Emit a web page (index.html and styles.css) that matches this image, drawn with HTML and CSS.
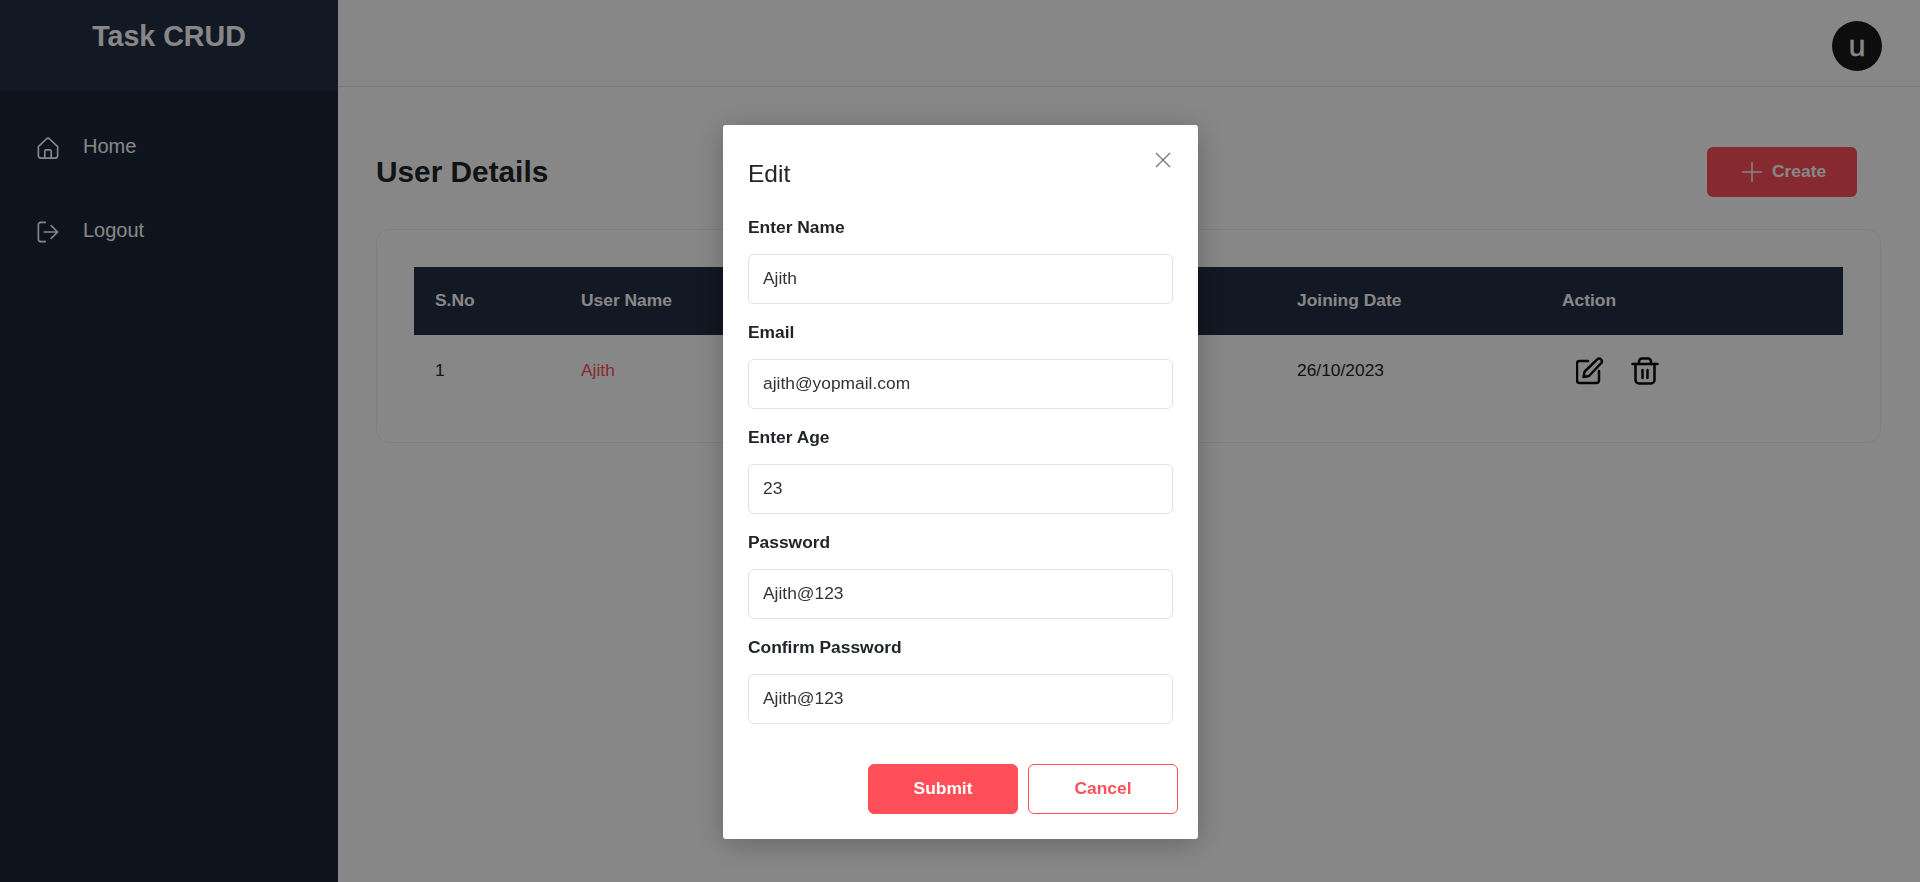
FILE: index.html
```html
<!DOCTYPE html>
<html>

<head lang="en">
    <meta charset="UTF-8">
    <title>Task CRUD</title>
    <link rel="stylesheet" href="styles.css">
</head>

<body>
    <div class="layout">
        <aside class="sidebar">
            <div class="brand">Task CRUD</div>
            <nav class="nav">
                <a class="nav_item" href="#">
                    <svg class="nav_icon" viewBox="0 0 24 24" fill="none" stroke="currentColor" stroke-width="1.8" stroke-linejoin="round">
                        <path d="M1.500 10.500 10.200 2.200a2.600 2.600 0 0 1 3.600 0l8.700 8.300V20.500a2.500 2.500 0 0 1-2.500 2.500H4a2.500 2.500 0 0 1-2.500-2.500z" />
                        <path d="M8.500 23v-7.500a1.500 1.500 0 0 1 1.500-1.500h4a1.500 1.500 0 0 1 1.500 1.500V23" />
                    </svg>
                    <span>Home</span>
                </a>
                <a class="nav_item" href="#">
                    <svg class="nav_icon" viewBox="0 0 24 24" fill="none" stroke="currentColor" stroke-width="1.8" stroke-linecap="round" stroke-linejoin="round">
                        <path d="M9 1.500H4A2.500 2.500 0 0 0 1.500 4v16A2.500 2.500 0 0 0 4 22.500h5" />
                        <path d="M8 12h14.500M15.500 5l7 7-7 7" />
                    </svg>
                    <span>Logout</span>
                </a>
            </nav>
        </aside>

        <div class="main">
            <header class="topbar">
                <div class="avatar">u</div>
            </header>

            <section class="content">
                <div class="title_row">
                    <h1 class="title">User Details</h1>
                    <button class="create_btn" type="button">
                        <svg class="plus_icon" viewBox="0 0 20 20" fill="none" stroke="currentColor" stroke-width="1.500">
                            <path d="M10 0v20M0 10h20" />
                        </svg>
                        <span>Create</span>
                    </button>
                </div>

                <div class="card">
                    <table class="user_table">
                        <thead>
                            <tr>
                                <th class="col_no">S.No</th>
                                <th class="col_name">User Name</th>
                                <th class="col_email">Email</th>
                                <th class="col_age">Age</th>
                                <th class="col_date">Joining Date</th>
                                <th>Action</th>
                            </tr>
                        </thead>
                        <tbody>
                            <tr>
                                <td>1</td>
                                <td class="user_link">Ajith</td>
                                <td>ajith@yopmail.com</td>
                                <td>23</td>
                                <td>26/10/2023</td>
                                <td>
                                    <div class="actions">
                                        <svg class="action_icon" viewBox="0 0 28 28" fill="none" stroke="currentColor" stroke-width="2.500" stroke-linecap="round" stroke-linejoin="round">
                                            <path d="M12 4H3.500A2.500 2.500 0 0 0 1 6.500v17A2.500 2.500 0 0 0 3.500 26h17a2.500 2.500 0 0 0 2.500-2.500V14" />
                                            <path d="M7.500 20l1.200-5.500L21.500 2.200a2.200 2.200 0 0 1 3.200 0l.6.6a2.200 2.200 0 0 1 0 3.200L13 19z" />
                                        </svg>
                                        <svg class="action_icon" viewBox="0 0 28 28" fill="none" stroke="currentColor" stroke-width="2.500" stroke-linecap="round" stroke-linejoin="round">
                                            <path d="M1.500 7h25" />
                                            <path d="M8 7V4.500A3 3 0 0 1 11 1.500h6a3 3 0 0 1 3 3V7" />
                                            <path d="M4.500 7v16A3.500 3.500 0 0 0 8 26.500h12a3.500 3.500 0 0 0 3.500-3.500V7" />
                                            <path d="M11.500 13v8M16.500 13v8" />
                                        </svg>
                                    </div>
                                </td>
                            </tr>
                        </tbody>
                    </table>
                </div>
            </section>
        </div>
    </div>

    <div class="backdrop"></div>

    <div class="modal">
        <h2 class="modal_title">Edit</h2>
        <svg class="close_icon" viewBox="0 0 16 16" fill="none" stroke="currentColor" stroke-width="1.300">
            <path d="M1 1l14 14M15 1 1 15" />
        </svg>
        <form class="modal_form">
            <div class="field">
                <label>Enter Name</label>
                <input type="text" value="Ajith">
            </div>
            <div class="field">
                <label>Email</label>
                <input type="text" value="ajith@yopmail.com">
            </div>
            <div class="field">
                <label>Enter Age</label>
                <input type="text" value="23">
            </div>
            <div class="field">
                <label>Password</label>
                <input type="text" value="Ajith@123">
            </div>
            <div class="field">
                <label>Confirm Password</label>
                <input type="text" value="Ajith@123">
            </div>
            <div class="modal_footer">
                <button class="submit_btn" type="button">Submit</button>
                <button class="cancel_btn" type="button">Cancel</button>
            </div>
        </form>
    </div>
</body>

</html>
```

FILE: styles.css
```css
* {
    margin: 0;
    padding: 0;
    box-sizing: border-box;
}

body {
    font-family: "Liberation Sans", Arial, sans-serif;
    font-size: 17.4px;
    color: #212529;
    background-color: #fff;
    overflow: hidden;
}

.layout {
    display: flex;
    height: 100vh;
}

.sidebar {
    width: 338px;
    flex-shrink: 0;
    background-color: #1b2639;
    color: #fff;
}

.brand {
    height: 91px;
    padding-top: 19px;
    background-color: #232e44;
    font-size: 28.6px;
    font-weight: bold;
    line-height: 34px;
    text-align: center;
}

.nav {
    display: flex;
    flex-direction: column;
    gap: 60px;
    padding: 45px 0 0 37px;
}

.nav_item {
    display: flex;
    align-items: center;
    gap: 24px;
    height: 24px;
    font-size: 20px;
    color: #fff;
    text-decoration: none;
}

.nav_item span {
    padding-bottom: 4px;
}

.nav_icon {
    width: 22px;
    height: 24px;
}

.main {
    flex: 1;
    min-width: 0;
}

.topbar {
    height: 87px;
    padding: 21px 38px 0 0;
    display: flex;
    justify-content: flex-end;
    border-bottom: 1px solid #e5e5e5;
}

.avatar {
    width: 50px;
    height: 50px;
    border-radius: 50%;
    background-color: #1a1a1a;
    color: #fff;
    font-size: 30px;
    line-height: 50px;
    text-align: center;
    -webkit-text-stroke: .5px;
}

.content {
    padding: 60px 39px 0 38px;
}

.title_row {
    display: flex;
    justify-content: space-between;
    align-items: center;
    padding-right: 24px;
    margin-bottom: 32px;
}

.title {
    font-size: 29.8px;
    font-weight: bold;
}

.create_btn {
    display: flex;
    align-items: center;
    gap: 10px;
    width: 150px;
    height: 50px;
    padding-left: 35px;
    border: 0;
    border-radius: 6px;
    background-color: #ff5059;
    color: #fff;
    font-family: inherit;
    font-size: 17.4px;
    font-weight: bold;
}

.create_btn span {
    padding-bottom: 2px;
}

.plus_icon {
    width: 20px;
    height: 20px;
}

.card {
    height: 214px;
    padding: 37px;
    border: 1px solid #efefef;
    border-radius: 14px;
    background-color: #fff;
}

.user_table {
    width: 100%;
    table-layout: fixed;
    border-collapse: collapse;
}

.user_table th {
    height: 68px;
    padding: 0 0 2px 21px;
    background-color: #232e44;
    color: #fff;
    font-weight: bold;
    text-align: left;
}

.user_table td {
    height: 70px;
    padding-left: 21px;
}

.col_no {
    width: 146px;
}

.col_name {
    width: 180px;
}

.col_email {
    width: 260px;
}

.col_age {
    width: 276px;
}

.col_date {
    width: 265px;
}

.user_link {
    color: #ff5059;
}

.actions {
    display: flex;
    gap: 27px;
    padding: 2px 0 0 14px;
    color: #0b0b0b;
}

.action_icon {
    width: 28px;
    height: 28px;
}

.backdrop {
    position: fixed;
    top: 0;
    left: 0;
    width: 100%;
    height: 100%;
    background-color: rgba(0, 0, 0, .47);
}

.modal {
    position: fixed;
    top: 125px;
    left: 723px;
    width: 475px;
    height: 714px;
    padding: 31px 25px 0;
    border-radius: 3px;
    background-color: #fff;
    box-shadow: 0 5px 30px rgba(0, 0, 0, .25);
}

.modal_title {
    font-size: 24.5px;
    font-weight: normal;
    line-height: 36px;
    margin-bottom: 22px;
}

.close_icon {
    position: absolute;
    top: 27px;
    right: 27px;
    width: 16px;
    height: 16px;
    color: #777;
}

.field {
    margin-bottom: 15px;
}

.field label {
    display: block;
    font-weight: bold;
    line-height: 26px;
    margin-bottom: 14px;
}

.field input {
    display: block;
    width: 100%;
    height: 50px;
    padding: 0 14px 2px;
    border: 1px solid #e2e2e2;
    border-radius: 6px;
    font-family: inherit;
    font-size: 17.4px;
    color: #333;
}

.modal_footer {
    display: flex;
    justify-content: flex-end;
    gap: 10px;
    margin: 40px -5px 0 0;
}

.submit_btn,
.cancel_btn {
    width: 150px;
    height: 50px;
    padding-bottom: 2px;
    border: 1px solid #ff5059;
    border-radius: 6px;
    font-family: inherit;
    font-size: 17.4px;
    font-weight: bold;
}

.submit_btn {
    background-color: #ff5059;
    color: #fff;
}

.cancel_btn {
    background-color: #fff;
    color: #ff5059;
}
```
